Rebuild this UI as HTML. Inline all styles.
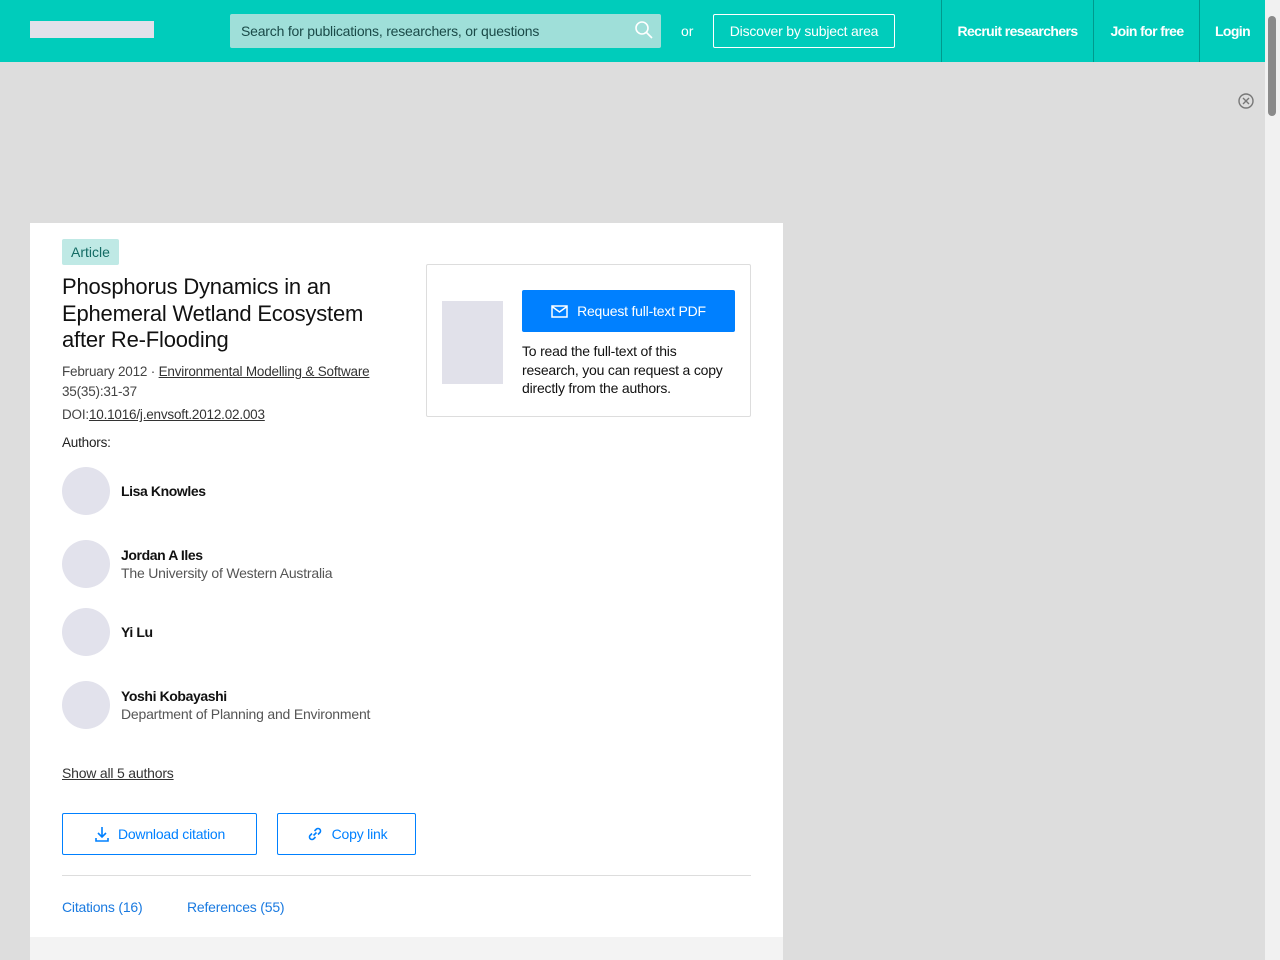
<!DOCTYPE html>
<html><head><meta charset="utf-8">
<style>
*{box-sizing:border-box;margin:0;padding:0}
body{width:1280px;height:960px;overflow:hidden;background:#dddddd;font-family:"Liberation Sans",Arial,sans-serif;position:relative;color:#111}
.hdr{position:absolute;left:0;top:0;width:1265px;height:62px;background:#00ccbb}
.logo{position:absolute;left:30px;top:21px;width:124px;height:17px;background:#e1e1ea}
.search{position:absolute;left:230px;top:14px;width:431px;height:34px;background:#9fdfd9;border-radius:2px;font-size:14px;color:#1a4a48;padding:9px 0 0 11px;letter-spacing:-0.2px}
.search svg{position:absolute;right:7px;top:6px}
.or{position:absolute;left:681px;top:23px;color:#fff;font-size:14px}
.disc{position:absolute;left:713px;top:14px;width:182px;height:34px;border:1px solid #fff;border-radius:2px;color:#fff;font-size:14px;text-align:center;line-height:32px;letter-spacing:-0.2px}
.nav{position:absolute;top:0;height:62px;border-left:1px solid #00998d;color:#fff;font-weight:bold;font-size:14px;line-height:62px;text-align:center;letter-spacing:-0.6px}
.sb{position:absolute;right:0;top:0;width:15px;height:960px;background:#f1f1f1}
.sb .th{position:absolute;left:3px;top:16px;width:8px;height:100px;background:#8a8a8a;border-radius:4px}
.card{position:absolute;left:30px;top:223px;width:753px;height:737px;background:#fff}
.foot{position:absolute;left:30px;top:937px;width:753px;height:23px;background:#f3f3f3}
.tag{position:absolute;left:62px;top:239px;width:57px;height:26px;background:#bfe9e5;color:#136b64;font-size:14px;line-height:26px;text-align:center;border-radius:2px}
h1{position:absolute;left:62px;top:274px;width:345px;font-weight:normal;font-size:22px;line-height:26.5px;letter-spacing:-0.2px;color:#111}
.meta{position:absolute;left:62px;font-size:13.5px;color:#444;letter-spacing:-0.2px}
.meta a{color:#333;text-decoration:underline}
.au{position:absolute;left:62px;}
.av{position:absolute;left:0;top:0;width:48px;height:48px;border-radius:50%;background:#e2e2ec}
.an{position:absolute;left:59px;font-size:14px;font-weight:bold;white-space:nowrap;letter-spacing:-0.4px}
.aa{position:absolute;left:59px;font-size:14px;color:#555;white-space:nowrap;letter-spacing:-0.2px}
.btn{position:absolute;top:813px;height:42px;border:1px solid #0080ff;border-radius:2px;color:#0080ff;font-size:14px;display:flex;align-items:center;justify-content:center;gap:8px;letter-spacing:-0.2px}
.hr{position:absolute;left:62px;top:875px;width:689px;height:1px;background:#ddd}
.tab{position:absolute;top:899px;color:#1a7ae0;font-size:14px;letter-spacing:-0.2px}
.box{position:absolute;left:426px;top:264px;width:325px;height:153px;border:1px solid #ddd;border-radius:2px}
.thumb{position:absolute;left:442px;top:301px;width:61px;height:83px;background:#e1e1ea}
.req{position:absolute;left:522px;top:290px;width:213px;height:42px;background:#0080ff;border-radius:2px;color:#fff;font-size:14px;display:flex;align-items:center;justify-content:center;gap:9px;letter-spacing:-0.2px}
.rt{position:absolute;left:522px;top:342px;width:205px;font-size:14px;line-height:18.5px;color:#111;letter-spacing:-0.2px}
</style></head><body>
<div class="hdr">
<div class="logo"></div>
<div class="search">Search for publications, researchers, or questions
<svg width="20" height="20" viewBox="0 0 20 20"><circle cx="8" cy="8" r="6" fill="none" stroke="#fff" stroke-width="1.6"/><path d="M12.5 12.5L18 18" stroke="#fff" stroke-width="1.6"/></svg></div>
<div class="or">or</div>
<div class="disc">Discover by subject area</div>
<div class="nav" style="left:941px;width:152px">Recruit researchers</div>
<div class="nav" style="left:1093px;width:107px">Join for free</div>
<div class="nav" style="left:1199px;width:66px">Login</div>
</div>
<svg style="position:absolute;left:1237px;top:92px" width="18" height="18" viewBox="0 0 18 18"><circle cx="9" cy="9" r="7" fill="none" stroke="#777" stroke-width="1.4"/><path d="M6 6L12 12M12 6L6 12" stroke="#777" stroke-width="1.4"/></svg>
<div class="sb"><div class="th"></div></div>
<div class="card"></div>
<div class="foot"></div>
<div class="tag">Article</div>
<h1>Phosphorus Dynamics in an Ephemeral Wetland Ecosystem after Re-Flooding</h1>
<div class="meta" style="top:364px">February 2012 · <a>Environmental Modelling &amp; Software</a></div>
<div class="meta" style="top:384px">35(35):31-37</div>
<div class="meta" style="top:407px">DOI:<a>10.1016/j.envsoft.2012.02.003</a></div>
<div class="meta" style="top:435px;color:#222">Authors:</div>
<div class="au" style="top:467px"><div class="av"></div><div class="an" style="top:16px">Lisa Knowles</div></div>
<div class="au" style="top:540px"><div class="av"></div><div class="an" style="top:7px">Jordan A Iles</div><div class="aa" style="top:25px">The University of Western Australia</div></div>
<div class="au" style="top:608px"><div class="av"></div><div class="an" style="top:16px">Yi Lu</div></div>
<div class="au" style="top:681px"><div class="av"></div><div class="an" style="top:7px">Yoshi Kobayashi</div><div class="aa" style="top:25px">Department of Planning and Environment</div></div>
<div class="meta" style="top:765px;color:#333;text-decoration:underline;font-size:14px">Show all 5 authors</div>
<div class="btn" style="left:62px;width:195px"><svg width="16" height="18" viewBox="0 0 16 18"><path d="M8 2V12M4 8L8 12L12 8M2 13V16H14V13" fill="none" stroke="#0080ff" stroke-width="1.6"/></svg>Download citation</div>
<div class="btn" style="left:277px;width:139px"><svg width="18" height="18" viewBox="0 0 18 18"><path d="M7.5 10.5L10.5 7.5M6 8.5L4 10.5a2.5 2.5 0 0 0 3.5 3.5L9.5 12M12 9.5L14 7.5a2.5 2.5 0 0 0-3.5-3.5L8.5 6" fill="none" stroke="#0080ff" stroke-width="1.6"/></svg>Copy link</div>
<div class="hr"></div>
<div class="tab" style="left:62px">Citations (16)</div>
<div class="tab" style="left:187px">References (55)</div>
<div class="box"></div>
<div class="thumb"></div>
<div class="req"><svg width="17" height="13" viewBox="0 0 17 13"><rect x="1" y="1" width="15" height="11" fill="none" stroke="#fff" stroke-width="1.5"/><path d="M1 1.5L8.5 7L16 1.5" fill="none" stroke="#fff" stroke-width="1.5"/></svg>Request full-text PDF</div>
<div class="rt">To read the full-text of this research, you can request a copy directly from the authors.</div>
</body></html>
